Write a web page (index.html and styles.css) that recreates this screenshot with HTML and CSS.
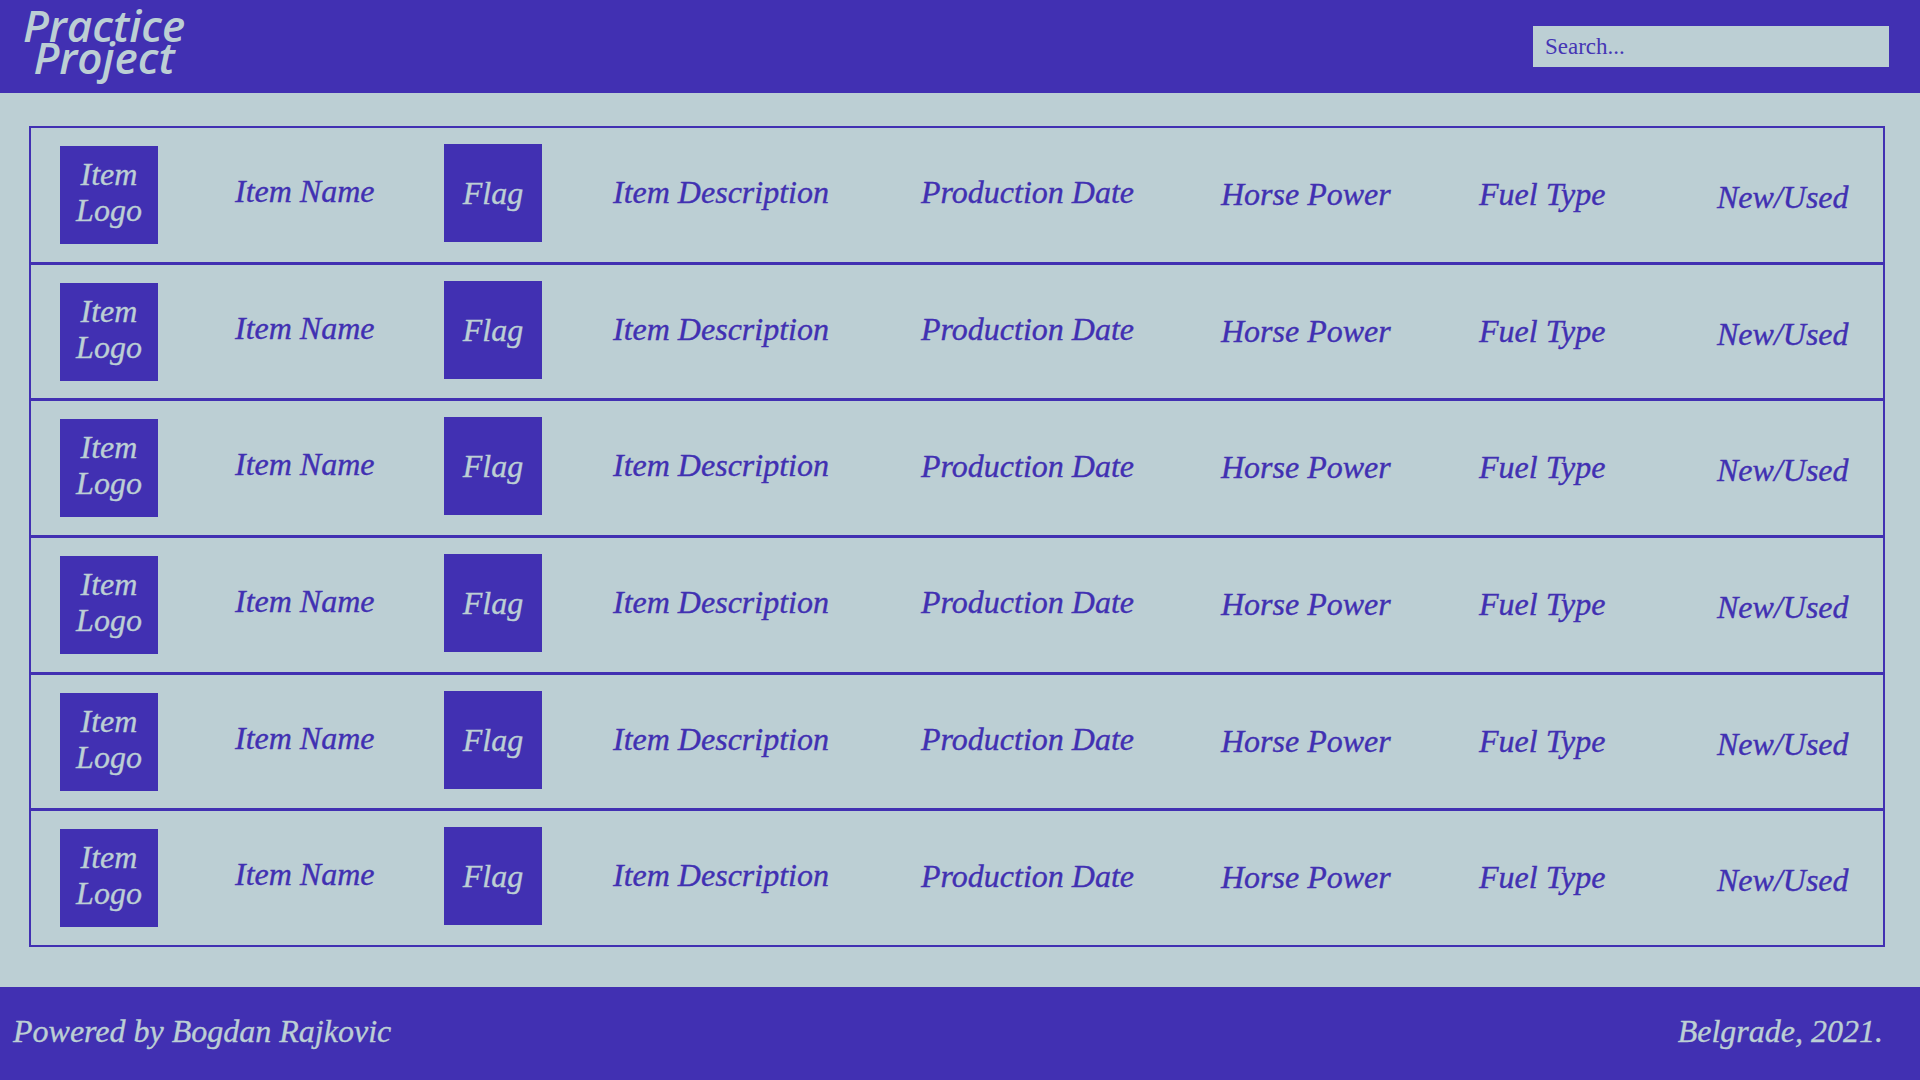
FILE: index.html
```html
<!DOCTYPE html>
<html lang="en">
<head>
<meta charset="utf-8">
<title>Practice Project</title>
<link rel="stylesheet" href="styles.css">
</head>
<body>
<div class="page">
  <header class="header">
    <div class="brand">Practice<br>Project</div>
    <input class="search" type="text" placeholder="Search...">
  </header>
  <main class="main">
    <div class="list">
      <div class="row">
        <div class="logo">Item<br>Logo</div>
        <div class="cell name">Item Name</div>
        <div class="flag">Flag</div>
        <div class="cell desc">Item Description</div>
        <div class="cell prod">Production Date</div>
        <div class="cell hp">Horse Power</div>
        <div class="cell fuel">Fuel Type</div>
        <div class="cell used">New/Used</div>
      </div>
      <div class="row">
        <div class="logo">Item<br>Logo</div>
        <div class="cell name">Item Name</div>
        <div class="flag">Flag</div>
        <div class="cell desc">Item Description</div>
        <div class="cell prod">Production Date</div>
        <div class="cell hp">Horse Power</div>
        <div class="cell fuel">Fuel Type</div>
        <div class="cell used">New/Used</div>
      </div>
      <div class="row">
        <div class="logo">Item<br>Logo</div>
        <div class="cell name">Item Name</div>
        <div class="flag">Flag</div>
        <div class="cell desc">Item Description</div>
        <div class="cell prod">Production Date</div>
        <div class="cell hp">Horse Power</div>
        <div class="cell fuel">Fuel Type</div>
        <div class="cell used">New/Used</div>
      </div>
      <div class="row">
        <div class="logo">Item<br>Logo</div>
        <div class="cell name">Item Name</div>
        <div class="flag">Flag</div>
        <div class="cell desc">Item Description</div>
        <div class="cell prod">Production Date</div>
        <div class="cell hp">Horse Power</div>
        <div class="cell fuel">Fuel Type</div>
        <div class="cell used">New/Used</div>
      </div>
      <div class="row">
        <div class="logo">Item<br>Logo</div>
        <div class="cell name">Item Name</div>
        <div class="flag">Flag</div>
        <div class="cell desc">Item Description</div>
        <div class="cell prod">Production Date</div>
        <div class="cell hp">Horse Power</div>
        <div class="cell fuel">Fuel Type</div>
        <div class="cell used">New/Used</div>
      </div>
      <div class="row">
        <div class="logo">Item<br>Logo</div>
        <div class="cell name">Item Name</div>
        <div class="flag">Flag</div>
        <div class="cell desc">Item Description</div>
        <div class="cell prod">Production Date</div>
        <div class="cell hp">Horse Power</div>
        <div class="cell fuel">Fuel Type</div>
        <div class="cell used">New/Used</div>
      </div>
    </div>
  </main>
  <footer class="footer">
    <div class="credit">Powered by Bogdan Rajkovic</div>
    <div class="place">Belgrade, 2021.</div>
  </footer>
</div>
</body>
</html>
```

FILE: styles.css
```css
* { box-sizing: border-box; }

html, body {
  margin: 0;
  padding: 0;
  height: 100%;
}

body {
  background: #bccfd4;
  font-family: "Liberation Serif", "Times New Roman", serif;
}

.page {
  display: flex;
  flex-direction: column;
  height: 100vh;
}

.header {
  height: 93px;
  flex: 0 0 93px;
  background: #4130b2;
  display: flex;
  align-items: flex-start;
  justify-content: space-between;
  padding: 0 31px 0 23px;
}

.brand {
  font-family: "Open Sans", "Noto Sans", sans-serif;
  font-style: italic;
  font-weight: 600;
  font-size: 44px;
  line-height: 31.5px;
  color: #bccfd4;
  text-align: center;
  margin-top: 10px;
}

.search {
  margin-top: 26px;
  width: 356px;
  height: 41px;
  border: none;
  outline: none;
  background: #bccfd4;
  color: #4130b2;
  font-family: "Liberation Serif", "Times New Roman", serif;
  font-size: 23px;
  padding: 0 12px;
}

.search::placeholder {
  color: #4535b4;
  opacity: 1;
}

.main {
  flex: 1;
  display: flex;
  padding: 33px 35px 40px 29px;
}

.list {
  flex: 1;
  display: flex;
  flex-direction: column;
  border: 2px solid #4130b2;
}

.row {
  flex: 1;
  display: grid;
  grid-template-columns: 173px 211px 169px 308px 300px 258px 238px 1fr;
  align-items: center;
  padding-left: 29px;
  border-top: 3px solid #4130b2;
}

.row:first-child {
  border-top: none;
}

.logo,
.flag {
  width: 98px;
  height: 98px;
  background: #4130b2;
  color: #bccfd4;
  font-style: italic;
  font-size: 32px;
  display: flex;
  align-items: center;
  justify-content: center;
  text-align: center;
  -webkit-text-stroke: 0.35px #bccfd4;
}

.logo {
  line-height: 36px;
  padding-bottom: 6px;
}

.flag {
  line-height: 1;
  margin-bottom: 4px;
}

.cell {
  font-style: italic;
  font-size: 32px;
  line-height: 1;
  color: #4130b2;
  white-space: nowrap;
  -webkit-text-stroke: 0.35px #4130b2;
}

.name { margin-bottom: 8px; margin-left: 2px; }
.desc { margin-bottom: 6px; }
.prod { margin-bottom: 5px; }
.hp { margin-bottom: 2px; }
.fuel { margin-bottom: 2px; }
.used { margin-top: 4px; }

.footer {
  height: 93px;
  flex: 0 0 93px;
  background: #4130b2;
  display: flex;
  align-items: center;
  justify-content: space-between;
  padding: 0 37px 5px 13px;
  color: #bccfd4;
  font-style: italic;
  font-size: 32px;
  -webkit-text-stroke: 0.35px #bccfd4;
}
```
